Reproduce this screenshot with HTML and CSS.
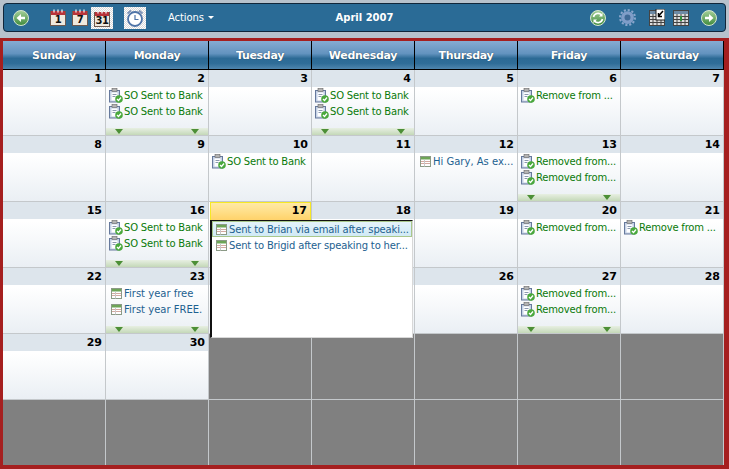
FILE: index.html
```html
<!DOCTYPE html>
<html lang="en">
<head>
<meta charset="utf-8">
<title>April 2007</title>
<link rel="stylesheet" href="styles.css">
</head>
<body>
<svg class="defs" width="0" height="0" aria-hidden="true">
  <defs>
    <linearGradient id="gg" x1="0" y1="0" x2="0" y2="1"><stop offset="0" stop-color="#a6d09a"/><stop offset="1" stop-color="#3e8a3c"/></linearGradient>
    <symbol id="task" viewBox="0 0 14 15">
      <rect x=".5" y="2.500" width="10" height="11.500" fill="#c6d2e6" stroke="#66799c"/>
      <rect x="2.500" y="4.500" width="6" height="8" fill="#fff"/>
      <path d="M3.500 6.500h4M3.500 8.500h3" stroke="#8a99b0"/>
      <rect x="3" y=".5" width="5" height="3" fill="#b4b4b4" stroke="#666" stroke-width=".6"/>
      <circle cx="10" cy="11" r="3.800" fill="#49a83c"/>
      <path d="M8 11l1.500 1.500L12 9.500" fill="none" stroke="#fff" stroke-width="1.300"/>
    </symbol>
    <symbol id="event" viewBox="0 0 11 11">
      <rect x=".5" y=".5" width="10" height="10" fill="#fff" stroke="#8b9a86"/>
      <rect x="1" y="1" width="9" height="2.500" fill="#6da556"/>
      <path d="M1 5.500h9M1 7.500h9" stroke="#d3a9a0"/>
      <path d="M4.500 3.500v7" stroke="#c9c9c9"/>
    </symbol>
    <symbol id="page" viewBox="0 0 16 17">
      <rect x=".5" y="2.500" width="15" height="14" fill="#efe9de" stroke="#6d5a50"/>
      <rect x="1" y="2" width="14" height="4" fill="#b8343a"/>
      <path d="M4 .5v3M8 .5v3M12 .5v3" stroke="#eee" stroke-width="1.300"/>
    </symbol>
    <symbol id="grid" viewBox="0 0 16 17">
      <rect x=".5" y="1.500" width="15" height="15" fill="#dcdcdc" stroke="#444"/>
      <rect x="1" y="2" width="14" height="3" fill="#6d8aa5"/>
      <path d="M.5 7.500h15M.5 10.500h15M.5 13.500h15M4 5v11M8 5v11M12 5v11" stroke="#444"/>
    </symbol>
  </defs>
</svg>

<header class="toolbar">
  <div class="tool-left">
    <svg class="round" viewBox="0 0 16 16"><circle cx="8" cy="8" r="7.500" fill="url(#gg)" stroke="#d5e6d0"/><path d="M12 6.800H8V4L3.500 8 8 12V9.200h4z" fill="#fff"/></svg>
    <span class="cal first"><svg class="cal-bg"><use href="#page"/></svg><b class="cal-num">1</b></span>
    <span class="cal"><svg class="cal-bg"><use href="#page"/></svg><b class="cal-num">7</b></span>
    <span class="cal picked"><svg class="cal-bg"><use href="#page"/></svg><b class="cal-num">31</b></span>
    <span class="clock picked"><svg viewBox="0 0 18 18" width="18" height="18"><circle cx="9" cy="10" r="7" fill="#fff" stroke="#4f74a8" stroke-width="1.800"/><path d="M9 6v4.500h3.500" fill="none" stroke="#4f74a8" stroke-width="1.200"/><path d="M1.500 4.500 5 1.500M16.500 4.500 13 1.500" stroke="#7e94b8" stroke-width="2"/></svg></span>
    <span class="actions">Actions<i class="caret"></i></span>
  </div>
  <div class="title">April 2007</div>
  <div class="tool-right">
    <svg class="round" viewBox="0 0 16 16"><circle cx="8" cy="8" r="7.500" fill="url(#gg)" stroke="#d5e6d0"/><path d="M3.500 7A4.600 4.600 0 0 1 11.500 5M12.500 9A4.600 4.600 0 0 1 4.500 11" fill="none" stroke="#fff" stroke-width="1.600"/><path d="M12.500 2.800v3.700H9zM3.500 13.200V9.500H7z" fill="#fff"/></svg>
    <svg class="gear" viewBox="0 0 16 16"><circle cx="8" cy="8" r="7" fill="none" stroke="#8aa6cc" stroke-width="2" stroke-dasharray="2 1.660"/><circle cx="8" cy="8" r="6" fill="#7f9dc8"/><circle cx="8" cy="8" r="2.800" fill="#3f6a96"/></svg>
    <svg class="tool-grid"><use href="#grid"/><rect x="7" y="0" width="9" height="11" fill="#fff" stroke="#222"/><path d="M14 2 10 6.500M9.500 4v3.500H13" fill="none" stroke="#000" stroke-width="1.500"/></svg>
    <svg class="tool-grid second"><use href="#grid"/><path d="M7 7h2v5H7z" fill="#2f8f3a"/></svg>
    <svg class="round next" viewBox="0 0 16 16"><circle cx="8" cy="8" r="7.500" fill="url(#gg)" stroke="#d5e6d0"/><path d="M4 6.800H8V4L12.500 8 8 12V9.200H4z" fill="#fff"/></svg>
  </div>
</header>

<main class="calendar">
  <div class="heads">
    <div class="head">Sunday</div><div class="head">Monday</div><div class="head">Tuesday</div><div class="head">Wednesday</div><div class="head">Thursday</div><div class="head">Friday</div><div class="head">Saturday</div>
  </div>
  <div class="month">
    <div class="day"><div class="num">1</div></div>
    <div class="day"><div class="num">2</div><div class="item so"><svg class="i-task"><use href="#task"/></svg>SO Sent to Bank</div><div class="item so"><svg class="i-task"><use href="#task"/></svg>SO Sent to Bank</div><div class="more"><i></i><i></i></div></div>
    <div class="day"><div class="num">3</div></div>
    <div class="day"><div class="num">4</div><div class="item so"><svg class="i-task"><use href="#task"/></svg>SO Sent to Bank</div><div class="item so"><svg class="i-task"><use href="#task"/></svg>SO Sent to Bank</div><div class="more"><i></i><i></i></div></div>
    <div class="day"><div class="num">5</div></div>
    <div class="day"><div class="num">6</div><div class="item so"><svg class="i-task"><use href="#task"/></svg>Remove from ...</div></div>
    <div class="day"><div class="num">7</div></div>

    <div class="day"><div class="num">8</div></div>
    <div class="day"><div class="num">9</div></div>
    <div class="day"><div class="num">10</div><div class="item so"><svg class="i-task"><use href="#task"/></svg>SO Sent to Bank</div></div>
    <div class="day"><div class="num">11</div></div>
    <div class="day"><div class="num">12</div><div class="item ev"><svg class="i-event"><use href="#event"/></svg>Hi Gary, As ex...</div></div>
    <div class="day"><div class="num">13</div><div class="item so"><svg class="i-task"><use href="#task"/></svg>Removed from...</div><div class="item so"><svg class="i-task"><use href="#task"/></svg>Removed from...</div><div class="more"><i></i><i></i></div></div>
    <div class="day"><div class="num">14</div></div>

    <div class="day"><div class="num">15</div></div>
    <div class="day"><div class="num">16</div><div class="item so"><svg class="i-task"><use href="#task"/></svg>SO Sent to Bank</div><div class="item so"><svg class="i-task"><use href="#task"/></svg>SO Sent to Bank</div><div class="more"><i></i><i></i></div></div>
    <div class="day today"><div class="num">17</div>
      <div class="popup">
        <div class="item ev sel"><svg class="i-event"><use href="#event"/></svg>Sent to Brian via email after speaki...</div>
        <div class="item ev"><svg class="i-event"><use href="#event"/></svg>Sent to Brigid after speaking to her...</div>
      </div>
    </div>
    <div class="day"><div class="num">18</div></div>
    <div class="day"><div class="num">19</div></div>
    <div class="day"><div class="num">20</div><div class="item so"><svg class="i-task"><use href="#task"/></svg>Removed from...</div></div>
    <div class="day"><div class="num">21</div><div class="item so"><svg class="i-task"><use href="#task"/></svg>Remove from ...</div></div>

    <div class="day"><div class="num">22</div></div>
    <div class="day"><div class="num">23</div><div class="item ev"><svg class="i-event"><use href="#event"/></svg>First year free</div><div class="item ev"><svg class="i-event"><use href="#event"/></svg>First year FREE.</div><div class="more"><i></i><i></i></div></div>
    <div class="day"><div class="num">24</div></div>
    <div class="day"><div class="num">25</div></div>
    <div class="day"><div class="num">26</div></div>
    <div class="day"><div class="num">27</div><div class="item so"><svg class="i-task"><use href="#task"/></svg>Removed from...</div><div class="item so"><svg class="i-task"><use href="#task"/></svg>Removed from...</div><div class="more"><i></i><i></i></div></div>
    <div class="day"><div class="num">28</div></div>

    <div class="day"><div class="num">29</div></div>
    <div class="day"><div class="num">30</div></div>
    <div class="day off"></div><div class="day off"></div><div class="day off"></div><div class="day off"></div><div class="day off"></div>

    <div class="day off"></div><div class="day off"></div><div class="day off"></div><div class="day off"></div><div class="day off"></div><div class="day off"></div><div class="day off"></div>
  </div>
</main>
</body>
</html>
```
FILE: styles.css
```css
* { box-sizing: border-box; }
html, body { margin: 0; height: 469px; overflow: hidden; }
body {
  width: 729px;
  background: #b7c2cc;
  font: 11px "DejaVu Sans", "Liberation Sans", sans-serif;
  padding-top: 3px;
  display: flex;
  flex-direction: column;
  gap: 6px;
}
.defs { position: absolute; }

.toolbar {
  flex: none;
  height: 29px;
  margin: 0 3px;
  background: #2a6b96;
  border: 1px solid #10263a;
  border-radius: 4px;
  display: grid;
  grid-template-columns: 1fr auto 1fr;
  align-items: center;
  color: #fff;
}
.tool-left, .tool-right { display: flex; align-items: center; }
.tool-left { padding-left: 9px; }
.tool-right { justify-content: flex-end; padding-right: 8px; }
.round { width: 16px; height: 16px; flex: none; }
.cal { position: relative; width: 16px; height: 17px; margin-left: 6px; flex: none; display: block; }
.cal.first { margin-left: 21px; }
.cal-bg { width: 16px; height: 17px; display: block; }
.cal-num {
  position: absolute; left: 0; right: 0; top: 5px;
  text-align: center; color: #111;
  font: bold 10px/12px "DejaVu Sans", sans-serif;
  letter-spacing: -.5px;
}
.cal.picked { width: 22px; height: 22px; margin-left: 3px; padding: 3px; background: repeating-conic-gradient(#fff 0 25%, #d9d9d9 0 50%) 0 0 / 2px 2px; }
.cal.picked .cal-num { top: 8px; }
.clock { width: 22px; height: 22px; margin-left: 11px; padding: 2px; background: repeating-conic-gradient(#fff 0 25%, #d9d9d9 0 50%) 0 0 / 2px 2px; display: block; }
.clock svg { display: block; }
.actions { margin-left: 22px; font-size: 10px; letter-spacing: -.1px; display: flex; align-items: center; }
.caret { width: 0; height: 0; margin-left: 4px; border: 3px solid transparent; border-top-color: #fff; border-bottom: 0; }
.title { font-weight: bold; font-size: 10px; }
.gear { width: 17px; height: 17px; margin-left: 13px; }
.tool-grid { width: 16px; height: 17px; margin-left: 13px; }
.tool-grid.second { margin-left: 8px; }
.next { margin-left: 12px; }

.calendar {
  flex: 1;
  background: #a51f1f;
  padding: 3px 5px 4px 3px;
}
.heads {
  display: grid;
  grid-template-columns: repeat(7, 102px);
  column-gap: 1px;
  background: #000;
  height: 29px;
  padding-bottom: 1px;
}
.head {
  background: linear-gradient(#86abd2 0, #6393bf 45%, #2c6a95 62%, #2f6d98 80%, #4f86ae 100%);
  color: #fff;
  font-weight: bold;
  font-size: 11px;
  letter-spacing: -.3px;
  display: flex;
  align-items: center;
  justify-content: center;
  text-shadow: 0 0 1px #234;
}
.month {
  display: grid;
  grid-template-columns: repeat(7, 102px);
  grid-auto-rows: 65px;
  gap: 1px;
  background: #c4c8cb;
}
.day {
  position: relative;
  background: linear-gradient(#fff 30%, #eaeff4 100%);
  display: flex;
  flex-direction: column;
  overflow: visible;
}
.day.off { background: #808080; }
.num {
  height: 17px;
  flex: none;
  background: #dde5ec;
  color: #000;
  font: bold 11px/18px "DejaVu Sans", sans-serif;
  text-align: right;
  padding-right: 3px;
}
.today { z-index: 2; }
.today .num {
  background: linear-gradient(#ffe9a6 0, #ffe08c 45%, #ffd26a 100%);
  border: 1px solid #f6e826;
  border-bottom: 0;
  line-height: 16px;
  height: 18px;
  margin-left: 1px;
}
.item {
  height: 16px;
  flex: none;
  display: flex;
  align-items: center;
  padding-left: 3px;
  font-size: 10px;
  letter-spacing: -.2px;
  white-space: nowrap;
  overflow: hidden;
}
.item.so { color: #0a7a0a; }
.item.ev { color: #1d6190; letter-spacing: 0; }
.i-task { width: 14px; height: 15px; margin-right: 1px; flex: none; }
.i-event { width: 11px; height: 11px; margin-left: 2px; margin-right: 2px; flex: none; }
.more {
  position: absolute;
  left: 0; right: 0; bottom: 0;
  height: 7px;
  background: linear-gradient(#e7efe2, #c4d8b8);
  display: flex;
  justify-content: space-between;
  padding: 1px 9px 0 9px;
}
.more i { width: 0; height: 0; border: 4px solid transparent; border-top: 5px solid #4c8f36; border-bottom: 0; }
.popup {
  position: absolute;
  left: 1px; top: 18px;
  width: 203px;
  height: 118px;
  background: #fff;
  border: 1px solid #d8d8d8;
  border-left: 2px solid #111;
  border-top: 1px solid #111;
}
.popup .item { padding-left: 2px; letter-spacing: -.16px; }
.item.sel {
  background: linear-gradient(#e6f4fb, #cfe9f5);
  box-shadow: inset 0 0 0 1px #a9c78c;
}
```
